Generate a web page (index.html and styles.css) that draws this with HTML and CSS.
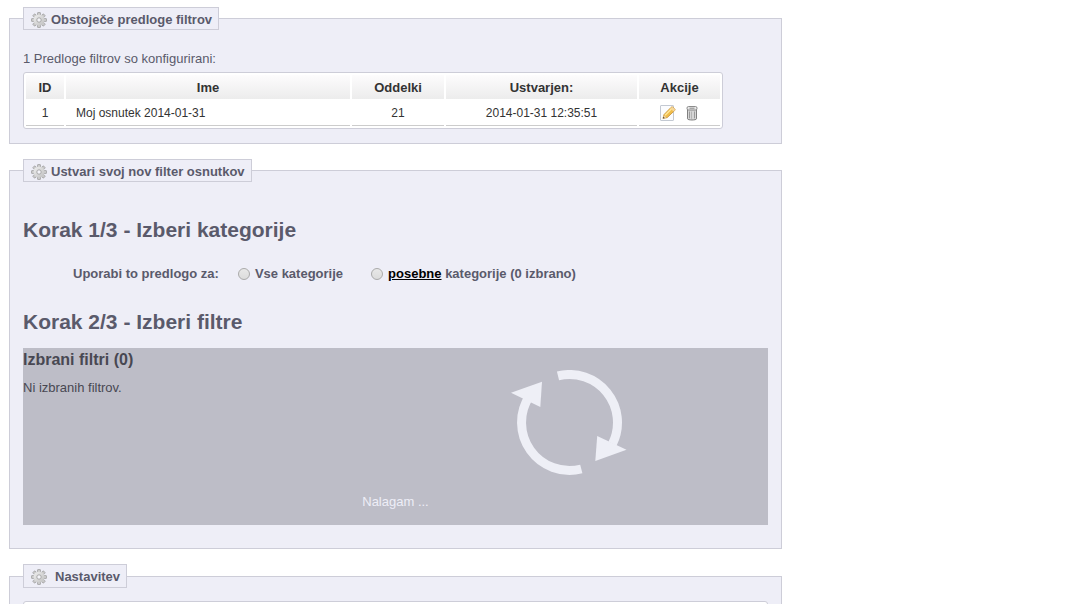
FILE: index.html
```html
<!DOCTYPE html>
<html lang="sl">
<head>
    <meta charset="UTF-8">
    <title>Predloge filtrov</title>
    <link rel="stylesheet" href="styles.css">
</head>
<body>
    <svg class="sprite" aria-hidden="true">
        <defs>
            <linearGradient id="metal" x1="0" y1="0" x2="1" y2="1">
                <stop offset="0" stop-color="#f0f0f0"/>
                <stop offset="1" stop-color="#c0c0c0"/>
            </linearGradient>
        </defs>
        <symbol id="gear" viewBox="0 0 16 16">
            <g fill="#c8c8c8" stroke="#858585" stroke-width="0.5">
                <rect x="6.5" y="0.5" width="3" height="15" rx="0.5"/>
                <rect x="6.5" y="0.5" width="3" height="15" rx="0.5" transform="rotate(45 8 8)"/>
                <rect x="6.5" y="0.5" width="3" height="15" rx="0.5" transform="rotate(90 8 8)"/>
                <rect x="6.5" y="0.5" width="3" height="15" rx="0.5" transform="rotate(135 8 8)"/>
            </g>
            <circle cx="8" cy="8" r="5.5" fill="url(#metal)"/>
            <circle cx="8" cy="8" r="2.2" fill="#f4f4f9" stroke="#9a9a9a" stroke-width="0.8"/>
        </symbol>
    </svg>
    <main>
        <fieldset>
            <legend><svg class="icon"><use href="#gear"/></svg>Obstoječe predloge filtrov</legend>
            <p class="summary">1 Predloge filtrov so konfigurirani:</p>
            <table class="templates">
                <thead>
                    <tr>
                        <th class="id">ID</th>
                        <th class="name">Ime</th>
                        <th class="sections">Oddelki</th>
                        <th class="created">Ustvarjen:</th>
                        <th class="actions">Akcije</th>
                    </tr>
                </thead>
                <tbody>
                    <tr>
                        <td>1</td>
                        <td class="name">Moj osnutek 2014-01-31</td>
                        <td>21</td>
                        <td>2014-01-31 12:35:51</td>
                        <td>
                            <div class="tools">
                                <a href="#edit" aria-label="Uredi">
                                    <svg class="icon" viewBox="0 0 16 16">
                                        <rect x="0.5" y="0.5" width="13" height="15" rx="0.5" fill="#fbfcfe" stroke="#c3c9d2"/>
                                        <path d="M3 13.4 4 9.6 11 2.4c.7-.7 1.4-.7 2.1 0l1.5 1.4c.6.6.6 1.2 0 1.8L7.2 12.6Z" fill="#f0bd4b" stroke="#c28a2c" stroke-width="0.8"/>
                                        <path d="M5.1 10.2 11.8 3.5" stroke="#ffe79a" stroke-width="1.5"/>
                                        <path d="m10.3 3.3 3.2 3.2 1.1-1.1c.5-.5.5-1 0-1.5l-1.5-1.4c-.5-.5-1-.5-1.6 0Z" fill="#f6d79c"/>
                                        <path d="M3 13.4 3.9 10.2 6.3 12.6Z" fill="#efd9b0"/>
                                        <path d="M2.8 13.6 3.3 11.7 4.8 13.1Z" fill="#4d4436"/>
                                    </svg>
                                </a>
                                <a href="#delete" aria-label="Izbriši">
                                    <svg class="icon" viewBox="0 0 16 16">
                                        <path d="M3.5 3.5h9v10.3c0 1.6-9 1.6-9 0Z" fill="#d6d6d6" stroke="#747474" stroke-width="0.9"/>
                                        <path d="M5.5 6.5v6.8M10.5 6.5v6.8" stroke="#9a9a9a"/>
                                        <path d="M7.5 6.5v7.3" stroke="#b4b4b4"/>
                                        <rect x="3" y="1.5" width="10" height="3.5" rx="1.5" fill="#e8e8e8" stroke="#808080" stroke-width="0.9"/>
                                        <path d="M5.5 3.2h5" stroke="#8a8a8a"/>
                                    </svg>
                                </a>
                            </div>
                        </td>
                    </tr>
                </tbody>
            </table>
        </fieldset>

        <fieldset>
            <legend><svg class="icon"><use href="#gear"/></svg>Ustvari svoj nov filter osnutkov</legend>
            <h2 class="first">Korak 1/3 - Izberi kategorije</h2>
            <div class="choices" role="radiogroup" aria-labelledby="scope">
                <span id="scope">Uporabi to predlogo za:</span>
                <label><input type="radio" name="scope">Vse kategorije</label>
                <label><input type="radio" name="scope"><span><a href="#categories">posebne</a> kategorije (0 izbrano)</span></label>
            </div>
            <h2>Korak 2/3 - Izberi filtre</h2>
            <div class="filters">
                <div class="chosen">
                    <h3>Izbrani filtri (0)</h3>
                    <p>Ni izbranih filtrov.</p>
                </div>
                <div class="loading">
                    <svg class="spinner" viewBox="0 0 116 106">
                        <g fill="none" stroke="#eeeff6" stroke-width="9">
                            <path d="M47 5.9A48 48 0 0 1 101.5 73.8"/>
                            <path d="M70.3 99A48 48 0 0 1 18.5 26"/>
                        </g>
                        <path d="M0 22.7 31 11.7 29.3 37Z" fill="#eeeff6"/>
                        <path d="M115.5 79.7 84.3 91 86.2 66Z" fill="#eeeff6"/>
                    </svg>
                </div>
                <p class="status">Nalagam ...</p>
            </div>
        </fieldset>

        <fieldset class="narrow">
            <legend><svg class="icon"><use href="#gear"/></svg>Nastavitev</legend>
            <div class="settings"></div>
        </fieldset>
    </main>
</body>
</html>
```

FILE: styles.css
```css
*{
    box-sizing: border-box;
}
body{
    margin: 0;
    padding: 7px 9px 0;
    font-family: "Liberation Sans", Arial, Helvetica, sans-serif;
    font-size: 13px;
    line-height: 16px;
    color: #5a5a6b;
    background: white;
}
main{
    max-width: 773px;
}
h2, h3, p{
    margin: 0;
}
.sprite{
    display: block;
    width: 0;
    height: 0;
}
.icon{
    display: block;
    width: 16px;
    height: 16px;
}
fieldset{
    margin: 0 0 15px;
    padding: 20px 13px 14px;
    border: 1px solid #cdcdd8;
    background: #eeeef7;
}
legend{
    display: flex;
    align-items: center;
    gap: 4px;
    height: 23px;
    padding: 2px 6px 0 7px;
    border: 1px solid #cdcdd8;
    background: #eeeef7;
    font-weight: bold;
}
.narrow{
    padding-top: 13px;
}
.narrow legend{
    gap: 8px;
    height: 24px;
}
.summary{
    padding-top: 1px;
    margin-bottom: 5px;
}
.templates{
    width: 100%;
    max-width: 700px;
    table-layout: fixed;
    border: 1px solid #cdcdd8;
    border-radius: 3px;
    border-spacing: 2px;
    background: white;
    color: #333;
    text-align: center;
    font-size: 12px;
}
.templates th{
    height: 24px;
    padding: 1px 0 0;
    font-size: 13px;
    background: linear-gradient(#fdfcfd, #ececec);
}
.templates td{
    height: 25px;
    padding: 0;
    border-bottom: 1px solid #ccc;
}
.templates td.name{
    padding-left: 10px;
    text-align: left;
}
.id{
    width: 38px;
}
.sections{
    width: 92px;
}
.created{
    width: 191px;
}
.actions{
    width: 81px;
}
.tools{
    display: flex;
    justify-content: center;
    gap: 8px;
}
h2{
    margin: 26px 0 12px;
    font-size: 21px;
    line-height: 28px;
}
h2.first{
    margin: 14px 0 22px;
}
.choices{
    display: flex;
    flex-wrap: wrap;
    padding-left: 50px;
    font-weight: bold;
}
.choices label{
    display: flex;
    align-items: center;
    gap: 5px;
    margin-left: 19px;
}
.choices label + label{
    margin-left: 28px;
}
.choices a{
    color: black;
}
input[type="radio"]{
    appearance: none;
    width: 12px;
    height: 12px;
    margin: 0;
    border: 1px solid #aaa;
    border-radius: 50%;
    background: linear-gradient(#e8e8e8, #dcdcdc);
}
input[type="radio"]:checked{
    box-shadow: inset 0 0 0 3px #ddd;
    background: #555;
}
.filters{
    display: grid;
    grid-template-columns: 46% 54%;
    margin-bottom: 9px;
    padding: 3px 0 15px;
    background: #bdbdc7;
    color: #484852;
}
.filters h3{
    margin-bottom: 11px;
    font-size: 16px;
    line-height: 18px;
}
.loading{
    display: flex;
    justify-content: center;
    padding: 19px 0 0 4px;
}
.spinner{
    width: 116px;
    height: 106px;
}
.status{
    grid-column: 1 / -1;
    padding-top: 18px;
    text-align: center;
    color: #eeeef7;
}
.settings{
    height: 60px;
    border: 1px solid #cdcdd8;
    border-radius: 3px;
    background: white;
}
```
